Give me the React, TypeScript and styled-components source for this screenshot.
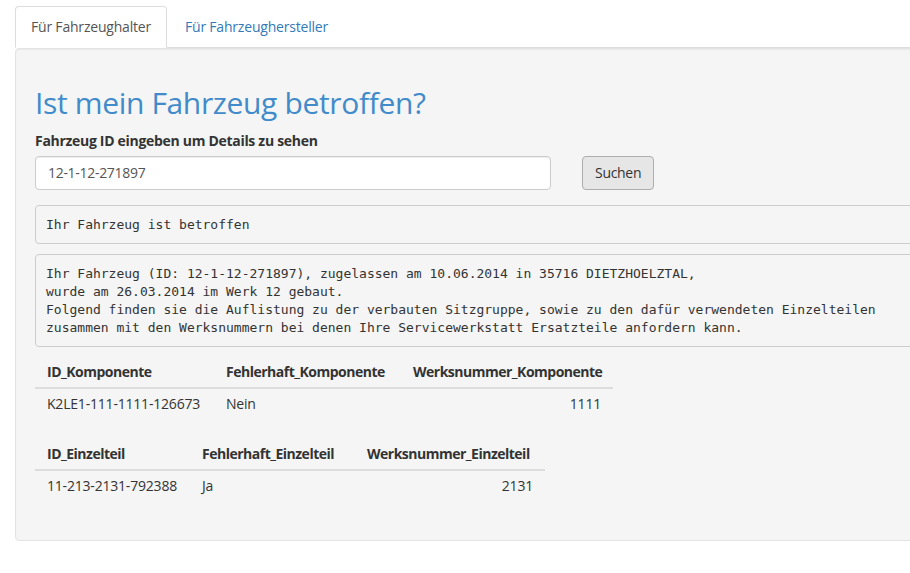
import React from "react";
import styled, { createGlobalStyle } from "styled-components";

const GlobalStyle = createGlobalStyle`
  html, body {
    margin: 0;
    padding: 0;
    background: #ffffff;
    overflow: hidden;
  }
  body {
    font-family: "Open Sans", "Noto Sans", sans-serif;
    font-size: 14px;
    line-height: 1.42857;
    color: #333333;
  }
  * { box-sizing: border-box; }
`;

const Page = styled.div`
  width: 1000px;
  padding: 6px 0 0 15px;
`;

const TabBar = styled.ul`
  display: flex;
  list-style: none;
  margin: 0;
  padding: 0;
  border-bottom: 1px solid #dddddd;
`;

const Tab = styled.li<{ $active?: boolean }>`
  margin: 0 2px -1px 0;
  padding: 10px 15px;
  line-height: 20px;
  letter-spacing: -0.2px;
  border: 1px solid ${(p) => (p.$active ? "#dddddd" : "transparent")};
  border-bottom-color: transparent;
  border-radius: 4px 4px 0 0;
  background: ${(p) => (p.$active ? "#ffffff" : "transparent")};
  color: ${(p) => (p.$active ? "#555555" : "#337ab7")};
  cursor: pointer;
`;

const Well = styled.div`
  background: #f5f5f5;
  border: 1px solid #e3e3e3;
  border-radius: 4px;
  box-shadow: inset 0 1px 1px rgba(0, 0, 0, 0.05);
  padding: 19px;
`;

const Title = styled.h2`
  margin: 18px 0 12px;
  font-size: 30px;
  line-height: 33px;
  font-weight: 400;
  letter-spacing: -0.35px;
  color: #428bca;
`;

const Label = styled.label`
  display: block;
  font-weight: 700;
  margin-bottom: 5px;
  letter-spacing: -0.3px;
`;

const SearchRow = styled.div`
  display: flex;
  align-items: center;
  gap: 31px;
  margin-bottom: 15px;
`;

const Input = styled.input`
  width: 516px;
  height: 34px;
  padding: 6px 12px;
  font-family: inherit;
  font-size: 14px;
  color: #555555;
  background: #ffffff;
  border: 1px solid #cccccc;
  border-radius: 4px;
  box-shadow: inset 0 1px 1px rgba(0, 0, 0, 0.075);
  outline: none;
  letter-spacing: -0.3px;
`;

const Button = styled.button`
  height: 34px;
  padding: 6px 12px;
  font-family: inherit;
  font-size: 14px;
  color: #333333;
  background: #e6e6e6;
  border: 1px solid #adadad;
  border-radius: 4px;
  letter-spacing: -0.3px;
`;

const Output = styled.pre`
  margin: 0 0 10px;
  padding: 10px 10px 9px;
  font-family: "DejaVu Sans Mono", "Liberation Mono", monospace;
  font-size: 13px;
  line-height: 18px;
  color: #333333;
  background: #f5f5f5;
  border: 1px solid #cccccc;
  border-radius: 4px;
  white-space: pre;
`;

const Table = styled.table<{ $w: number }>`
  width: ${(p) => p.$w}px;
  border-collapse: collapse;
  table-layout: fixed;
  margin-bottom: 20px;
`;

const Th = styled.th<{ $w: number }>`
  width: ${(p) => p.$w}px;
  padding: 5px 12px;
  line-height: 20px;
  text-align: left;
  font-weight: 700;
  border-bottom: 2px solid #dddddd;
  white-space: nowrap;
  letter-spacing: -0.5px;
`;

const Td = styled.td<{ $right?: boolean }>`
  padding: 5px 12px;
  line-height: 20px;
  text-align: ${(p) => (p.$right ? "right" : "left")};
  white-space: nowrap;
  letter-spacing: -0.2px;
`;

type Col = { name: string; width: number };

const DataTable = ({ cols, row }: { cols: Col[]; row: string[] }) => (
  <Table $w={cols.reduce((s, c) => s + c.width, 0)}>
    <thead>
      <tr>
        {cols.map((c) => (
          <Th key={c.name} $w={c.width}>
            {c.name}
          </Th>
        ))}
      </tr>
    </thead>
    <tbody>
      <tr>
        {row.map((v, i) => (
          <Td key={i} $right={i === row.length - 1}>
            {v}
          </Td>
        ))}
      </tr>
    </tbody>
  </Table>
);

const message = `Ihr Fahrzeug (ID: 12-1-12-271897), zugelassen am 10.06.2014 in 35716 DIETZHOELZTAL,
wurde am 26.03.2014 im Werk 12 gebaut.
Folgend finden sie die Auflistung zu der verbauten Sitzgruppe, sowie zu den dafür verwendeten Einzelteilen
zusammen mit den Werksnummern bei denen Ihre Servicewerkstatt Ersatzteile anfordern kann.`;

export default function App() {
  return (
    <>
      <GlobalStyle />
      <Page>
        <TabBar>
          <Tab $active>Für Fahrzeughalter</Tab>
          <Tab>Für Fahrzeughersteller</Tab>
        </TabBar>
        <Well>
          <Title>Ist mein Fahrzeug betroffen?</Title>
          <Label htmlFor="fid">Fahrzeug ID eingeben um Details zu sehen</Label>
          <SearchRow>
            <Input id="fid" defaultValue="12-1-12-271897" />
            <Button>Suchen</Button>
          </SearchRow>
          <Output>Ihr Fahrzeug ist betroffen</Output>
          <Output>{message}</Output>
          <DataTable
            cols={[
              { name: "ID_Komponente", width: 179 },
              { name: "Fehlerhaft_Komponente", width: 187 },
              { name: "Werksnummer_Komponente", width: 212 },
            ]}
            row={["K2LE1-111-1111-126673", "Nein", "1111"]}
          />
          <DataTable
            cols={[
              { name: "ID_Einzelteil", width: 155 },
              { name: "Fehlerhaft_Einzelteil", width: 165 },
              { name: "Werksnummer_Einzelteil", width: 190 },
            ]}
            row={["11-213-2131-792388", "Ja", "2131"]}
          />
        </Well>
      </Page>
    </>
  );
}
